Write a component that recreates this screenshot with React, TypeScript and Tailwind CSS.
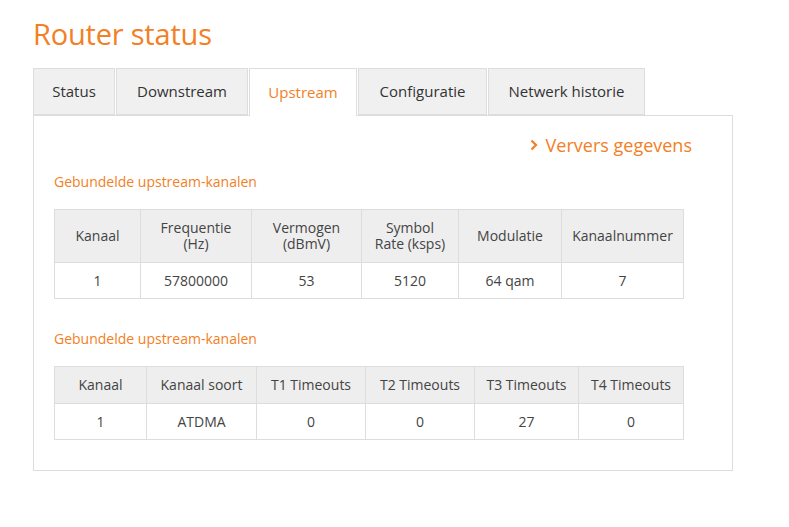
import React from 'react';

const tabs = [
  { label: 'Status', w: 'w-[82px]' },
  { label: 'Downstream', w: 'w-[132px]' },
  { label: 'Upstream', w: 'w-[108px]' },
  { label: 'Configuratie', w: 'w-[129px]' },
  { label: 'Netwerk historie', w: 'w-[157px]' },
];

const table1 = {
  widths: ['w-[86px]', 'w-[111px]', 'w-[110px]', 'w-[97px]', 'w-[103px]', 'w-[122px]'],
  head: [['Kanaal'], ['Frequentie', '(Hz)'], ['Vermogen', '(dBmV)'], ['Symbol', 'Rate (ksps)'], ['Modulatie'], ['Kanaalnummer']],
  row: ['1', '57800000', '53', '5120', '64 qam', '7'],
};

const table2 = {
  widths: ['w-[92px]', 'w-[110px]', 'w-[109px]', 'w-[109px]', 'w-[104px]', 'w-[105px]'],
  head: [['Kanaal'], ['Kanaal soort'], ['T1 Timeouts'], ['T2 Timeouts'], ['T3 Timeouts'], ['T4 Timeouts']],
  row: ['1', 'ATDMA', '0', '0', '27', '0'],
};

type T = typeof table1;

const DataTable = ({ t, headH }: { t: T; headH: string }) => (
  <table className="border-collapse w-[629px] table-fixed text-[14px] text-[#444]">
    <thead>
      <tr className={`bg-[#eee] ${headH}`}>
        {t.head.map((lines, i) => (
          <th key={i} className={`${t.widths[i]} border border-[#ddd] font-normal text-center leading-[16px] px-1`}>
            {lines.length === 2 ? (
              <>
                {lines[0]}
                <br />
                {lines[1]}
              </>
            ) : (
              lines[0]
            )}
          </th>
        ))}
      </tr>
    </thead>
    <tbody>
      <tr className="h-[36px]">
        {t.row.map((v, i) => (
          <td key={i} className="border border-[#ddd] text-center">
            {v}
          </td>
        ))}
      </tr>
    </tbody>
  </table>
);

export default function App() {
  return (
    <div className="w-[789px] h-[527px] bg-white pl-[33px] font-['Open_Sans',sans-serif] text-[#333]">
      <h1 className="pt-[15px] text-[29px] leading-[38px] text-[#f28025] tracking-[-0.2px]">Router status</h1>

      <div className="mt-[15px] flex gap-[1px] h-[47px]">
        {tabs.map((tab) =>
          tab.label === 'Upstream' ? (
            <div
              key={tab.label}
              className={`${tab.w} relative z-10 h-[48px] flex items-center justify-center bg-white border border-b-0 border-[#ddd] text-[15px] text-[#f28025]`}
            >
              {tab.label}
            </div>
          ) : (
            <div
              key={tab.label}
              className={`${tab.w} h-[47px] flex items-center justify-center bg-[#f0f0f0] border border-[#ddd] text-[15px]`}
            >
              {tab.label}
            </div>
          )
        )}
      </div>

      <div className="w-[700px] h-[356px] border border-[#ddd] pl-[20px] pr-[40px]">
        <div className="flex justify-end pt-[17px]">
          <a className="flex items-center gap-[8px] text-[18px] leading-[24px] text-[#f28025]">
            <svg width="8" height="12" viewBox="0 0 8 12" fill="none">
              <path d="M1.5 1.5 L6 6 L1.5 10.5" stroke="#f28025" strokeWidth="2.2" />
            </svg>
            Ververs gegevens
          </a>
        </div>

        <h2 className="mt-[15px] text-[14px] leading-[20px] text-[#f28025]">Gebundelde upstream-kanalen</h2>
        <div className="mt-[17px]">
          <DataTable t={table1} headH="h-[53px]" />
        </div>

        <h2 className="mt-[30px] text-[14px] leading-[20px] text-[#f28025]">Gebundelde upstream-kanalen</h2>
        <div className="mt-[17px]">
          <DataTable t={table2 as T} headH="h-[37px]" />
        </div>
      </div>
    </div>
  );
}
